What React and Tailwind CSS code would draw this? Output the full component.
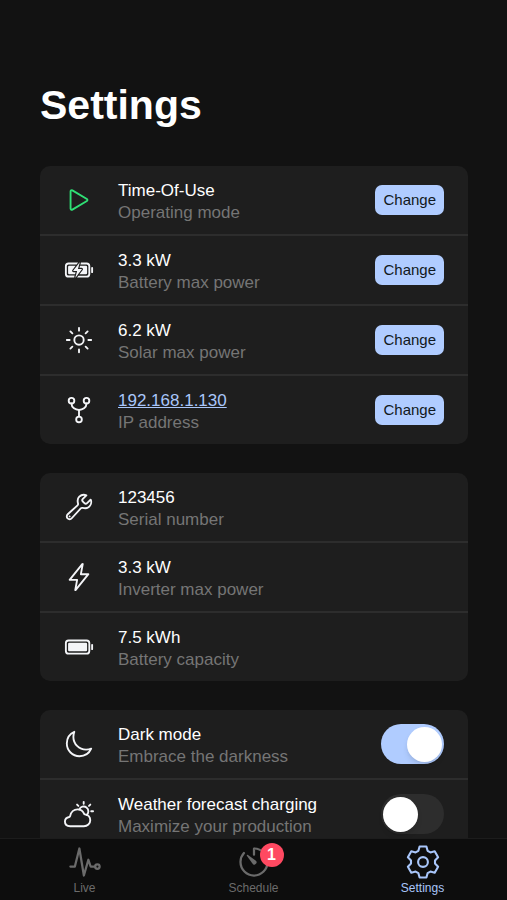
import { useState } from "react";
import {
  IoBatteryCharging,
  IoBatteryFull,
  IoBuildOutline,
  IoFlashOutline,
  IoGitNetworkOutline,
  IoMoonOutline,
  IoPartlySunnyOutline,
  IoPlayOutline,
  IoPulseOutline,
  IoSunnyOutline,
  IoTimerOutline,
} from "react-icons/io5";

// six-toothed gear for the settings tab
const GearIcon = (props) => (
  <svg
    viewBox="0 0 36 36"
    fill="none"
    stroke="currentColor"
    strokeWidth="2.1"
    strokeLinejoin="round"
    {...props}
  >
    <path d="M14.6 2.5H21.4L22.6 6.8L25.4 8.4L29.7 7.3L33.1 13.2L30 16.4V19.6L33.1 22.8L29.7 28.7L25.4 27.6L22.6 29.2L21.4 33.5H14.6L13.4 29.2L10.6 27.6L6.3 28.7L2.9 22.8L6 19.6V16.4L2.9 13.2L6.3 7.3L10.6 8.4L13.4 6.8Z" />
    <circle cx="18" cy="18" r="4.9" />
  </svg>
);

const Card = ({ children }) => (
  <ul className="divide-y-2 divide-[#2d2d2d] overflow-hidden rounded-[10px] bg-[#1e1e1e]">
    {children}
  </ul>
);

const Row = ({ icon: Icon, iconClass = "text-[#f4f5f8]", title, subtitle, children }) => (
  <li className="flex items-center px-6">
    <Icon className={`size-[30px] shrink-0 ${iconClass}`} aria-hidden="true" />
    <div className="ml-6 flex-1 pt-[14px] pb-[10px] text-[17px] leading-[22px]">
      <div className="text-white">{title}</div>
      <div className="text-[#757575]">{subtitle}</div>
    </div>
    {children}
  </li>
);

const ChangeButton = ({ label }) => (
  <button
    type="button"
    aria-label={`Change ${label}`}
    className="h-[30px] rounded-[7px] bg-[#b0ccff] px-2 text-[15px] text-[#101820]"
  >
    Change
  </button>
);

const Toggle = ({ id, checked, onChange }) => (
  <input
    id={id}
    type="checkbox"
    role="switch"
    checked={checked}
    onChange={(e) => onChange(e.target.checked)}
    className="flex h-10 w-[63px] appearance-none items-center rounded-full bg-[#2d2d2d] px-[2px] before:size-[35px] before:rounded-full before:bg-white before:shadow-md before:content-[''] checked:justify-end checked:bg-[#b0ccff]"
  />
);

const tabs = [
  { name: "Live", icon: IoPulseOutline },
  { name: "Schedule", icon: IoTimerOutline, badge: 1 },
  { name: "Settings", icon: GearIcon },
];

export default function App() {
  const [darkMode, setDarkMode] = useState(true);
  const [forecast, setForecast] = useState(false);
  const [tab, setTab] = useState("Settings");

  return (
    <div className="flex h-screen flex-col bg-[#121212] font-['Liberation_Sans',Arial,sans-serif]">
      <main className="min-h-0 flex-1 overflow-y-auto pt-20 pr-[39px] pb-10 pl-10 [scrollbar-width:none]">
        <h1 className="text-[41px] leading-[50px] font-bold text-white">Settings</h1>

        <div className="mt-9 flex flex-col gap-[29px]">
          {/* Inverter configuration */}
          <Card>
            <Row
              icon={IoPlayOutline}
              iconClass="text-[#2fdf75]"
              title="Time-Of-Use"
              subtitle="Operating mode"
            >
              <ChangeButton label="operating mode" />
            </Row>
            <Row icon={IoBatteryCharging} title="3.3 kW" subtitle="Battery max power">
              <ChangeButton label="battery max power" />
            </Row>
            <Row icon={IoSunnyOutline} title="6.2 kW" subtitle="Solar max power">
              <ChangeButton label="solar max power" />
            </Row>
            <Row
              icon={IoGitNetworkOutline}
              title={
                <a href="http://192.168.1.130" className="text-[#a9c6fa] underline">
                  192.168.1.130
                </a>
              }
              subtitle="IP address"
            >
              <ChangeButton label="IP address" />
            </Row>
          </Card>

          {/* Device info */}
          <Card>
            <Row icon={IoBuildOutline} title="123456" subtitle="Serial number" />
            <Row icon={IoFlashOutline} title="3.3 kW" subtitle="Inverter max power" />
            <Row icon={IoBatteryFull} title="7.5 kWh" subtitle="Battery capacity" />
          </Card>

          {/* Preferences */}
          <Card>
            <Row
              icon={IoMoonOutline}
              title={<label htmlFor="dark-mode">Dark mode</label>}
              subtitle="Embrace the darkness"
            >
              <Toggle id="dark-mode" checked={darkMode} onChange={setDarkMode} />
            </Row>
            <Row
              icon={IoPartlySunnyOutline}
              title={<label htmlFor="forecast">Weather forecast charging</label>}
              subtitle="Maximize your production"
            >
              <Toggle id="forecast" checked={forecast} onChange={setForecast} />
            </Row>
          </Card>
        </div>
      </main>

      {/* Tab bar */}
      <nav className="flex border-t border-[#1c1c1c] bg-[#0d0d0d]">
        {tabs.map(({ name, icon: Icon, badge }) => (
          <button
            key={name}
            type="button"
            onClick={() => setTab(name)}
            className={`flex flex-1 flex-col items-center pt-[5px] pb-1 text-xs leading-4 ${
              tab === name ? "text-[#a9c6fa]" : "text-[#6b6b6b]"
            }`}
          >
            <span className="relative">
              <Icon className="size-9" aria-hidden="true" />
              {badge && (
                <span className="absolute -top-px left-6 flex size-6 items-center justify-center rounded-full bg-[#ff4961] text-base font-bold text-white">
                  {badge}
                </span>
              )}
            </span>
            {name}
          </button>
        ))}
      </nav>
    </div>
  );
}
